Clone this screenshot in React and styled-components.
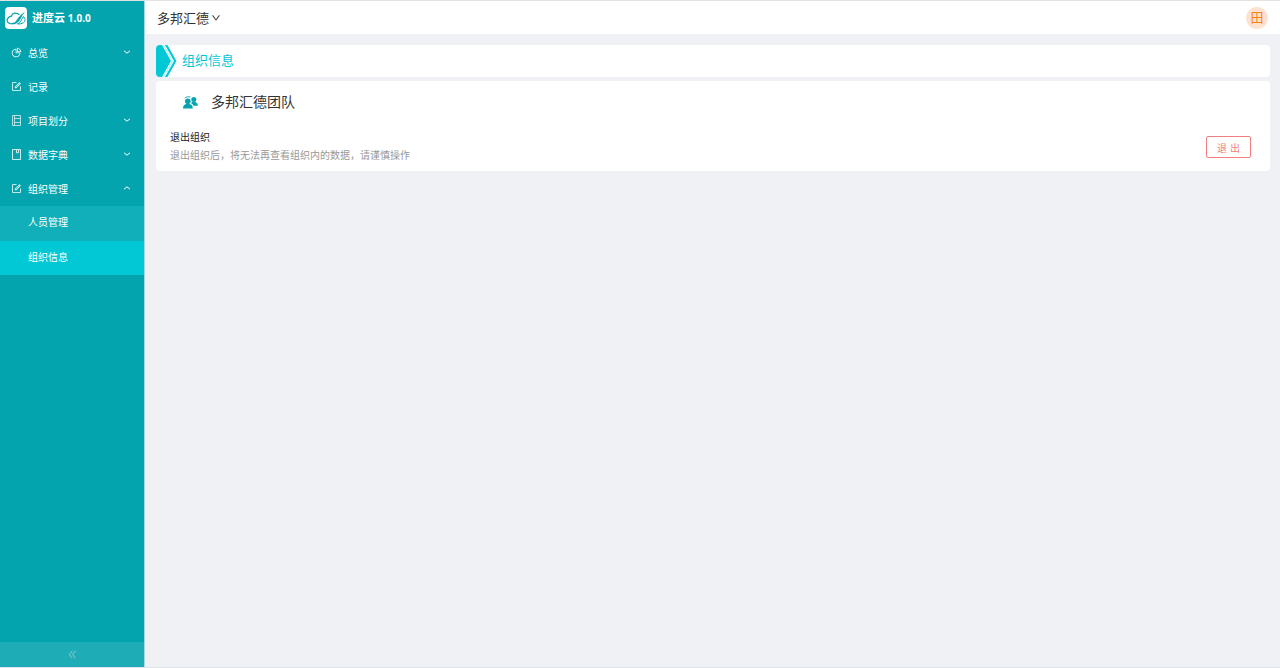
import { useState } from 'react';
import styled, { createGlobalStyle } from 'styled-components';
import { AiOutlinePieChart, AiOutlineForm, AiOutlineDown, AiOutlineDoubleLeft } from 'react-icons/ai';

const colors = {
    side: '#03a4ae',
    sideSub: '#11afba',
    sideFoot: '#1eadb7',
    active: '#02c8d5',
    page: '#f0f1f5',
    danger: '#f08080',
}

const ListIcon = () => (
    <svg width="11" height="11" viewBox="0 0 11 11" fill="none" stroke="currentColor" strokeWidth="0.8" opacity="0.85" aria-hidden="true">
        <path d="M1.5 0.5H9.5V10.5H1.5ZM3.5 0.5V10.5M3.5 3.5H9.5M3.5 7.5H9.5" />
    </svg>
)

const BookIcon = () => (
    <svg width="11" height="11" viewBox="0 0 11 11" fill="none" stroke="currentColor" strokeWidth="0.9" opacity="0.9" aria-hidden="true">
        <path d="M1.5 0.5H9.5V10.5H1.5ZM5.5 0.5V3.8L7.5 3.8V0.5" />
    </svg>
)

const menu = [
    { label: '总览', icon: AiOutlinePieChart, children: [] },
    { label: '记录', icon: AiOutlineForm },
    { label: '项目划分', icon: ListIcon, children: [] },
    { label: '数据字典', icon: BookIcon, children: [] },
    { label: '组织管理', icon: AiOutlineForm, children: ['人员管理', '组织信息'] },
]

const Logo = () => (
    <svg width="22" height="22" viewBox="0 0 22 22" fill="none" stroke={colors.side} strokeLinecap="round" aria-hidden="true">
        <rect width="22" height="22" rx="4" fill="#fff" stroke="none" />
        <path d="M14 7.6C11.4 5 7 6 6.4 9.2C3.2 9.8 1.4 12.6 2.3 14.6C3.2 16.8 6.6 17 9 16.2" strokeWidth="1.3" />
        <path d="M7.4 17C12.4 15.4 11.4 10.4 19.4 5.4C15.4 9.6 15.8 14.6 9.8 17Z" fill={colors.side} strokeWidth="0.4" />
        <path d="M12.8 16.9C16.2 15.6 16.4 12.4 18.2 9.6C20.8 10.8 20.4 14.4 18.4 15.7C16.8 16.8 14.6 17.1 12.8 16.9Z" strokeWidth="1" />
    </svg>
)

const Arrow = () => (
    <svg width="21" height="32" viewBox="0 0 21 32" fill={colors.active} aria-hidden="true">
        <path d="M4 0H6L15 16L6 32H4Q0 32 0 28V4Q0 0 4 0Z" />
        <path d="M7.2 0H8L17 16L8 32H7.2L16.2 16Z" opacity="0.4" />
        <path d="M9 0H11.4L20.4 16L11.4 32H9L18 16Z" />
    </svg>
)

const Chevron = ({ up }) => (
    <svg width="8" height="8" viewBox="0 0 8 8" fill="none" stroke="currentColor" aria-hidden="true">
        <path d={up ? 'M1 5.2L4 2.8L7 5.2' : 'M1 2.8L4 5.2L7 2.8'} />
    </svg>
)

const TeamIcon = () => (
    <svg width="15" height="13" viewBox="0 0 15 13" fill={colors.side} aria-hidden="true">
        <circle cx="4.8" cy="5.2" r="2.8" />
        <path d="M0 12.4C0 9.6 1.6 8.6 3.2 8.1H6.4C8.2 8.6 9.8 9.6 9.8 12.4Z" />
        <circle cx="10.8" cy="3.6" r="2.5" />
        <path d="M8.2 6.8L9.4 6H12.2C13.8 6.5 14.8 7.6 14.8 9.8H10.4C10 8.5 9.2 7.7 8 7.3Z" />
        <path d="M1.8 2Q4 0.2 7.4 0.9" fill="none" stroke={colors.side} strokeWidth="0.9" />
    </svg>
)

function App() {
    const [opened, setOpened] = useState('组织管理')
    const [current, setCurrent] = useState('组织信息')

    return (
        <Layout>
            <GlobalStyle />
            <Sidebar>
                <Brand>
                    <Logo />
                    <BrandName>进度云 <small>1.0.0</small></BrandName>
                </Brand>
                <Menu>
                    {menu.map(({ label, icon: Icon, children }) => (
                        <li key={label}>
                            <MenuButton type="button" onClick={() => setOpened(opened === label ? '' : label)}>
                                <Icon size={11} />
                                <span>{label}</span>
                                {children && <Chevron up={opened === label} />}
                            </MenuButton>
                            {opened === label && children?.length > 0 &&
                                <SubMenu>
                                    {children.map((item) => (
                                        <li key={item}>
                                            <SubLink href="#" $active={item === current} onClick={() => setCurrent(item)}>{item}</SubLink>
                                        </li>
                                    ))}
                                </SubMenu>
                            }
                        </li>
                    ))}
                </Menu>
                <Collapse type="button" aria-label="收起">
                    <AiOutlineDoubleLeft size={11} />
                </Collapse>
            </Sidebar>
            <Main>
                <Header>
                    <OrgButton type="button">多邦汇德 <AiOutlineDown size={10} stroke="currentColor" strokeWidth={30} /></OrgButton>
                    <Avatar type="button">田</Avatar>
                </Header>
                <Content>
                    <TitleBar>
                        <Arrow />
                        <h1>组织信息</h1>
                    </TitleBar>
                    <Card>
                        <Team>
                            <TeamIcon />
                            <h2>多邦汇德团队</h2>
                        </Team>
                        <QuitRow>
                            <div>
                                <QuitTitle>退出组织</QuitTitle>
                                <QuitText>退出组织后，将无法再查看组织内的数据，请谨慎操作</QuitText>
                            </div>
                            <QuitButton type="button">退 出</QuitButton>
                        </QuitRow>
                    </Card>
                </Content>
            </Main>
        </Layout>
    )
}

export default App

const GlobalStyle = createGlobalStyle`
    *{
        box-sizing:border-box;
    }
    body{
        margin:0;
        font-family:"Liberation Sans", "Noto Sans CJK SC", sans-serif;
        font-size:10px;
        color:#333;
        background:${colors.page};
    }
    h1, h2, p, ul{
        margin:0;
        padding:0;
        font-weight:400;
    }
    ul{
        list-style:none;
    }
    button{
        font-family:inherit;
        cursor:pointer;
    }
    svg{
        flex:none;
    }
`
const Layout = styled.div`
    display:flex;
    min-height:100vh;
    border-top:1px solid #e2e2e2;
    border-bottom:1px solid #dfe3e8;
`
const Sidebar = styled.nav`
    display:flex;
    flex-direction:column;
    flex:none;
    width:145px;
    color:#fff;
    background:${colors.side};
    border-right:1px solid #a5d8df;
`
const Brand = styled.div`
    display:flex;
    align-items:center;
    gap:5px;
    height:34px;
    padding-left:5px;
`
const BrandName = styled.strong`
    font-family:"Open Sans", "Noto Sans CJK SC", sans-serif;
    font-size:11px;
    line-height:16px;
    & small{
        font-size:10px;
    }
`
const Menu = styled.ul`
    flex:1;
`
const MenuButton = styled.button`
    display:flex;
    align-items:center;
    gap:6px;
    width:100%;
    height:34px;
    padding:0 13px 0 11px;
    border:0;
    font-size:10px;
    color:#fff;
    background:none;
    & span{
        flex:1;
        text-align:left;
    }
`
const SubMenu = styled.ul`
    display:grid;
    gap:1px;
    border-top:1px solid ${colors.side};
    background:${colors.sideSub};
`
const SubLink = styled.a`
    display:block;
    padding-left:28px;
    line-height:34px;
    color:#fff;
    text-decoration:none;
    background:${props => props.$active ? colors.active : 'none'};
`
const Collapse = styled.button`
    display:flex;
    align-items:center;
    justify-content:center;
    height:25px;
    border:0;
    color:#8fc4c6;
    background:${colors.sideFoot};
`
const Main = styled.main`
    flex:1;
    min-width:0;
`
const Header = styled.header`
    display:flex;
    align-items:center;
    justify-content:space-between;
    height:33px;
    padding:0 12px;
    background:#fff;
`
const OrgButton = styled.button`
    display:flex;
    align-items:center;
    gap:2px;
    padding:0;
    border:0;
    font-size:13px;
    color:#333;
    background:none;
`
const Avatar = styled.button`
    width:22px;
    height:22px;
    padding:0;
    border:0;
    border-radius:50%;
    font-size:13px;
    line-height:22px;
    color:#f98217;
    background:#fde3cf;
`
const Content = styled.div`
    display:grid;
    gap:4px;
    padding:11px 10px 11px 11px;
`
const TitleBar = styled.div`
    display:flex;
    align-items:center;
    gap:5px;
    height:32px;
    border-radius:4px;
    background:#fff;
    & h1{
        font-size:13px;
        line-height:20px;
        color:${colors.active};
    }
`
const Card = styled.section`
    padding:11px 19px 6px 14px;
    border-radius:4px;
    background:#fff;
`
const Team = styled.div`
    display:flex;
    align-items:center;
    gap:13px;
    padding-left:13px;
    & h2{
        font-size:14px;
        line-height:20px;
    }
`
const QuitRow = styled.div`
    display:flex;
    align-items:center;
    justify-content:space-between;
    margin-top:17px;
    line-height:18px;
`
const QuitTitle = styled.p`
    color:#222;
`
const QuitText = styled.p`
    color:#999;
`
const QuitButton = styled.button`
    width:45px;
    height:22px;
    padding:0;
    border:1px solid ${colors.danger};
    border-radius:2px;
    font-size:10px;
    color:${colors.danger};
    background:#fff;
`
